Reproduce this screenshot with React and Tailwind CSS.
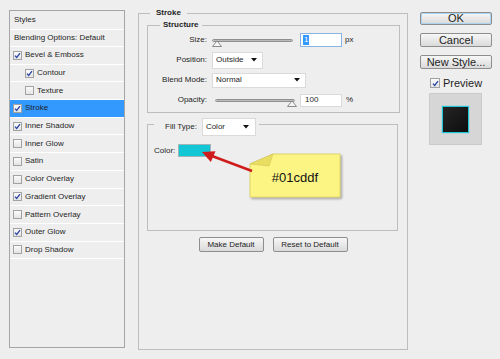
import React from "react";

const styleRows = [
  { name: "Bevel & Emboss", checked: true },
  { name: "Contour", checked: true, indent: true },
  { name: "Texture", checked: false, indent: true },
  { name: "Stroke", checked: true, active: true },
  { name: "Inner Shadow", checked: true },
  { name: "Inner Glow", checked: false },
  { name: "Satin", checked: false },
  { name: "Color Overlay", checked: false },
  { name: "Gradient Overlay", checked: true },
  { name: "Pattern Overlay", checked: false },
  { name: "Outer Glow", checked: true },
  { name: "Drop Shadow", checked: false },
];

const CheckBox = ({ checked, size = "w-[9px] h-[9px]" }) => (
  <span
    className={`flex items-center justify-center shrink-0 border border-[#a2a2a2] bg-linear-to-b from-[#fbfbfb] to-[#e4e4e4] ${size}`}
  >
    {checked && (
      <svg width="7" height="7" viewBox="0 0 7 7">
        <path d="M1 3.6 L2.7 5.5 L6 1.2" fill="none" stroke="#2b45a6" strokeWidth="1.3" />
      </svg>
    )}
  </span>
);

const Arrow = () => (
  <svg width="6" height="4" viewBox="0 0 6 4" className="shrink-0">
    <path d="M0 0 H6 L3 3.5 Z" fill="#111" />
  </svg>
);

const Slider = ({ width, thumbLeft }) => (
  <div className={`relative h-[12px] flex items-center ${width}`}>
    <div className="w-full h-[3px] rounded-full border border-[#8f8f8f] bg-linear-to-b from-[#9a9a9a] to-[#dedede]" />
    <svg width="10" height="7" viewBox="0 0 10 7" className={`absolute top-[6px] ${thumbLeft}`}>
      <path d="M0.5 6.5 L5 0.8 L9.5 6.5 Z" fill="#f6f6f6" stroke="#8a8a8a" strokeWidth="1" />
    </svg>
  </div>
);

const Button = ({ children, className = "" }) => (
  <div
    className={`flex items-center justify-center rounded-[2px] border border-[#8e8e8e] bg-linear-to-b from-[#f7f7f7] to-[#dadada] ${className}`}
  >
    {children}
  </div>
);

const App = () => {
  return (
    <div className="relative flex w-[500px] h-[359px] bg-[#eeeeee] text-[8px] text-[#1e1e1e] font-['Liberation_Sans',Arial,sans-serif] overflow-hidden">
      {/* styles list */}
      <div className="mt-[10px] ml-[9px] w-[116px] h-[338px] border border-[#a5a5a5] bg-[#eeeeee] flex flex-col">
        <div className="h-[19px] shrink-0 flex items-center pl-[4px] border-b border-white">Styles</div>
        <div className="h-[17px] shrink-0 flex items-center pl-[4px] border-b border-white">
          Blending Options: Default
        </div>
        {styleRows.map((row) => (
          <div
            key={row.name}
            className={`h-[17.7px] shrink-0 flex items-center gap-[3px] border-b border-white ${
              row.indent ? "pl-[15px]" : "pl-[3px]"
            } ${row.active ? "bg-[#3399ff]" : ""}`}
          >
            <CheckBox checked={row.checked} />
            <span>{row.name}</span>
          </div>
        ))}
      </div>

      {/* stroke panel */}
      <fieldset className="ml-[13px] mt-[7px] w-[270px] h-[343px] border border-[#bdbdbd] p-0 flex flex-col">
        <legend className="ml-[11px] px-[6px] leading-[12px] font-bold">Stroke</legend>

        <fieldset className="ml-[8px] w-[253px] border border-[#bdbdbd] p-0 pb-[2px]">
          <legend className="ml-[12px] px-[3px] leading-[12px] font-bold">Structure</legend>
          <div className="-mt-[1px] flex flex-col">
            <div className="h-[20px] flex items-center">
              <span className="w-[59px] text-right">Size:</span>
              <div className="ml-[5px]">
                <Slider width="w-[81px]" thumbLeft="left-[0px]" />
              </div>
              <div className="ml-[7px] w-[42px] h-[14px] bg-white border border-[#88b4e4] flex items-center pl-[2px]">
                <span className="bg-[#3399ff] text-white px-[1px] leading-[10px]">1</span>
              </div>
              <span className="ml-[3px]">px</span>
            </div>
            <div className="h-[20px] flex items-center">
              <span className="w-[59px] text-right">Position:</span>
              <div className="ml-[5px] w-[51px] h-[17px] bg-white border border-[#dadada] flex items-center justify-between pl-[3px] pr-[5px]">
                <span>Outside</span>
                <Arrow />
              </div>
            </div>
            <div className="h-[20px] flex items-center">
              <span className="w-[59px] text-right">Blend Mode:</span>
              <div className="ml-[5px] w-[94px] h-[15px] bg-white border border-[#dadada] flex items-center justify-between pl-[3px] pr-[5px]">
                <span>Normal</span>
                <Arrow />
              </div>
            </div>
            <div className="h-[20px] flex items-center">
              <span className="w-[59px] text-right">Opacity:</span>
              <div className="ml-[8px]">
                <Slider width="w-[80px]" thumbLeft="right-[-2px]" />
              </div>
              <div className="ml-[5px] w-[42px] h-[13px] bg-white border border-[#dadada] flex items-center pl-[4px]">
                100
              </div>
              <span className="ml-[4px]">%</span>
            </div>
          </div>
        </fieldset>

        <fieldset className="ml-[8px] mt-[5px] w-[251px] h-[113px] border border-[#bdbdbd] p-0">
          <legend className="ml-[6px] pl-[11px] pr-[3px] h-[12px] flex items-start">
            <span className="leading-[18px]">Fill Type:</span>
            <div className="ml-[5px] w-[54px] h-[18px] bg-white border border-[#dadada] flex items-center justify-between pl-[3px] pr-[6px]">
              <span>Color</span>
              <Arrow />
            </div>
          </legend>
          <div className="mt-[14px] ml-[6px] flex items-center h-[13px]">
            <span>Color:</span>
            <div className="ml-[3px] w-[33px] h-[13px] bg-[#12c6d6] border border-[#9fb6b8]" />
          </div>
        </fieldset>

        <div className="mt-[6px] flex justify-center gap-[9px]">
          <Button className="w-[65px] h-[15px]">Make Default</Button>
          <Button className="w-[75px] h-[15px]">Reset to Default</Button>
        </div>
      </fieldset>

      {/* right column */}
      <div className="ml-[12px] mt-[12px] w-[72px] flex flex-col text-[11px]">
        <Button className="h-[13px] border-[#4a86b8] from-[#eef5fb] to-[#cfdeeb] shadow-[inset_0_0_0_1px_#a9d3f0]">
          OK
        </Button>
        <Button className="mt-[8px] h-[14px]">Cancel</Button>
        <Button className="mt-[8px] h-[14px]">New Style...</Button>
        <div className="mt-[9px] flex items-center gap-[3px] pl-[10px] h-[10px]">
          <CheckBox checked size="w-[10px] h-[10px]" />
          <span>Preview</span>
        </div>
        <div className="mt-[5px] ml-[9px] w-[53px] h-[52px] bg-[#d6d6d6] border border-[#cbcbcb] flex items-center justify-center">
          <div className="w-[27px] h-[27px] bg-linear-to-br from-[#242424] to-[#0e0e0e] border-[1.5px] border-[#1fc7d6] shadow-[0_0_1px_#1fc7d6]" />
        </div>
      </div>

      {/* annotation */}
      <svg
        width="150"
        height="60"
        viewBox="195 145 150 60"
        className="absolute left-[195px] top-[145px]"
      >
        <defs>
          <filter id="noteShadow" x="-10%" y="-10%" width="130%" height="140%">
            <feDropShadow dx="1.5" dy="1.5" stdDeviation="1" floodColor="#000" floodOpacity="0.35" />
          </filter>
        </defs>
        <path
          d="M250 164 L273 154 L340 154 L340 197 L250 197 Z"
          fill="#fcf584"
          stroke="#d9cc5a"
          strokeWidth="0.8"
          filter="url(#noteShadow)"
        />
        <path d="M250 164 L273 154 L269 166 Z" fill="#e9dd62" stroke="#d2c454" strokeWidth="0.6" />
        <line x1="252" y1="171" x2="212" y2="156" stroke="#cf1c1c" strokeWidth="2.6" />
        <path d="M202 152 L215.5 151.2 L210.8 162 Z" fill="#cf1c1c" />
      </svg>
      <div className="absolute left-[250px] top-[154px] w-[90px] h-[43px] flex items-center justify-center pt-[4px] text-[13px] text-[#111] font-['Liberation_Sans',Arial,sans-serif]">
        #01cddf
      </div>
    </div>
  );
};

export default App;
